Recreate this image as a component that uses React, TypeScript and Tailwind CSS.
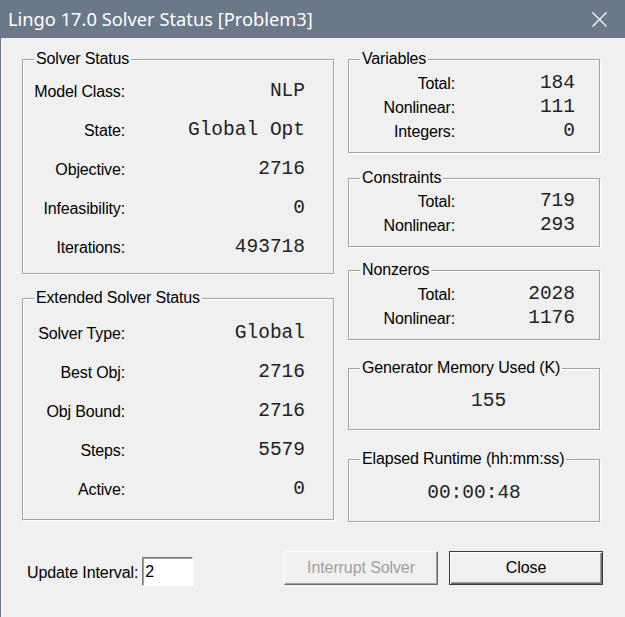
import React from "react";

const labelFont = { fontFamily: '"Liberation Sans", Arial, sans-serif' };
const monoFont = { fontFamily: '"Liberation Mono", "Courier New", monospace' };

interface Row {
  label: string;
  value: string;
}

const GroupBox = ({
  title,
  className,
  children,
}: {
  title: string;
  className?: string;
  children: React.ReactNode;
}) => (
  <fieldset
    className={`border border-[#a3a3a3] shadow-[1px_1px_0_#ffffff,inset_1px_1px_0_#ffffff] ${className ?? ""}`}
  >
    <legend className="ml-[11px] px-[2px] text-[16px] leading-[20px] tracking-[-0.15px] text-black">
      {title}
    </legend>
    {children}
  </fieldset>
);

const StatusRows = ({ rows, rowClass, labelWidth, valuePad }: { rows: Row[]; rowClass: string; labelWidth: string; valuePad: string }) => (
  <>
    {rows.map((r) => (
      <div key={r.label + r.value} className={`flex items-center ${rowClass}`}>
        <div className={`${labelWidth} shrink-0 whitespace-nowrap text-right text-[16px] tracking-[-0.15px] text-black`}>
          {r.label}
        </div>
        <div
          className={`flex-1 whitespace-pre text-right text-[19.5px] text-[#222] ${valuePad}`}
          style={monoFont}
        >
          {r.value}
        </div>
      </div>
    ))}
  </>
);

const solverStatus: Row[] = [
  { label: "Model Class:", value: "NLP" },
  { label: "State:", value: "Global Opt" },
  { label: "Objective:", value: "2716" },
  { label: "Infeasibility:", value: "0" },
  { label: "Iterations:", value: "493718" },
];

const extendedStatus: Row[] = [
  { label: "Solver Type:", value: "Global" },
  { label: "Best Obj:", value: "2716" },
  { label: "Obj Bound:", value: "2716" },
  { label: "Steps:", value: "5579" },
  { label: "Active:", value: "0" },
];

export default function App() {
  return (
    <div className="flex h-[617px] w-[625px] flex-col overflow-hidden bg-[#f0f0f0]" style={labelFont}>
      {/* title bar */}
      <div className="flex h-[38px] shrink-0 items-center justify-between bg-[#6a7889] pl-[8px] pr-[18px]">
        <span className="text-[18.3px] text-white" style={{ fontFamily: '"Noto Sans", "Open Sans", sans-serif' }}>
          Lingo 17.0 Solver Status [Problem3]
        </span>
        <svg width="15" height="15" viewBox="0 0 15 15" className="mt-[1px]">
          <path d="M0.5 0.5 L14.5 14.5 M14.5 0.5 L0.5 14.5" stroke="#ffffff" strokeWidth="1.2" fill="none" />
        </svg>
      </div>

      <div className="flex flex-1 flex-col border-l border-[#6a7889] pl-[21px] pr-[25px] pt-[11px]">
        <div className="flex gap-[14px]">
          {/* left column */}
          <div className="flex w-[312px] flex-col">
            <GroupBox title="Solver Status" className="pt-[3px] pb-[6px]">
              <StatusRows rows={solverStatus} rowClass="h-[39px]" labelWidth="w-[102px]" valuePad="pr-[28px]" />
            </GroupBox>
            <GroupBox title="Extended Solver Status" className="mt-[14px] pt-[6px] pb-[10px]">
              <StatusRows rows={extendedStatus} rowClass="h-[39px]" labelWidth="w-[102px]" valuePad="pr-[28px]" />
            </GroupBox>
          </div>

          {/* right column */}
          <div className="flex w-[252px] flex-col">
            <GroupBox title="Variables" className="pt-[3px] pb-[8px]">
              <StatusRows
                rows={[
                  { label: "Total:", value: "184" },
                  { label: "Nonlinear:", value: "111" },
                  { label: "Integers:", value: "0" },
                ]}
                rowClass="h-[24px]"
                labelWidth="w-[106px]"
                valuePad="pr-[24px]"
              />
            </GroupBox>
            <GroupBox title="Constraints" className="mt-[15px] pt-[2px] pb-[8px]">
              <StatusRows
                rows={[
                  { label: "Total:", value: "719" },
                  { label: "Nonlinear:", value: "293" },
                ]}
                rowClass="h-[24px]"
                labelWidth="w-[106px]"
                valuePad="pr-[24px]"
              />
            </GroupBox>
            <GroupBox title="Nonzeros" className="mt-[13px] pt-[3px] pb-[8px]">
              <StatusRows
                rows={[
                  { label: "Total:", value: "2028" },
                  { label: "Nonlinear:", value: "1176" },
                ]}
                rowClass="h-[24px]"
                labelWidth="w-[106px]"
                valuePad="pr-[24px]"
              />
            </GroupBox>
            <GroupBox title="Generator Memory Used (K)" className="mt-[18px] pt-[11px] pb-[16px]">
              <div className="h-[24px] pl-[122px] text-[19.5px] leading-[24px] text-[#222]" style={monoFont}>
                155
              </div>
            </GroupBox>
            <GroupBox title="Elapsed Runtime (hh:mm:ss)" className="mt-[19px] pt-[12px] pb-[16px]">
              <div className="h-[24px] text-center text-[19.5px] leading-[24px] text-[#222]" style={monoFont}>
                00:00:48
              </div>
            </GroupBox>
          </div>
        </div>

        {/* bottom row */}
        <div className="mt-[29px] flex items-start">
          <span className="ml-[5px] mt-[13px] text-[16px] leading-[18px] tracking-[-0.1px] text-black">
            Update Interval:
          </span>
          <input
            defaultValue="2"
            className="ml-[4px] mt-[6px] h-[29px] w-[51px] border border-t-[#7a7a7a] border-l-[#7a7a7a] border-b-white border-r-white bg-white px-[2px] text-[16px] text-black shadow-[inset_1px_1px_0_#a0a0a0] outline-none"
            style={labelFont}
          />
          <div className="-mr-[3px] ml-auto flex gap-[11px]">
            <button
              disabled
              className="h-[34px] w-[154px] border border-t-white border-l-white border-b-[#696969] border-r-[#696969] bg-[#f0f0f0] text-[16px] tracking-[-0.1px] text-[#a0a0a0] shadow-[inset_-1px_-1px_0_#a0a0a0]"
              style={labelFont}
            >
              Interrupt Solver
            </button>
            <button
              className="h-[34px] w-[154px] border border-[#3c3c3c] bg-[#f0f0f0] text-[16px] tracking-[-0.1px] text-black shadow-[inset_1px_1px_0_#ffffff,inset_-1px_-1px_0_#696969,inset_-2px_-2px_0_#a0a0a0]"
              style={labelFont}
            >
              Close
            </button>
          </div>
        </div>
      </div>
    </div>
  );
}
